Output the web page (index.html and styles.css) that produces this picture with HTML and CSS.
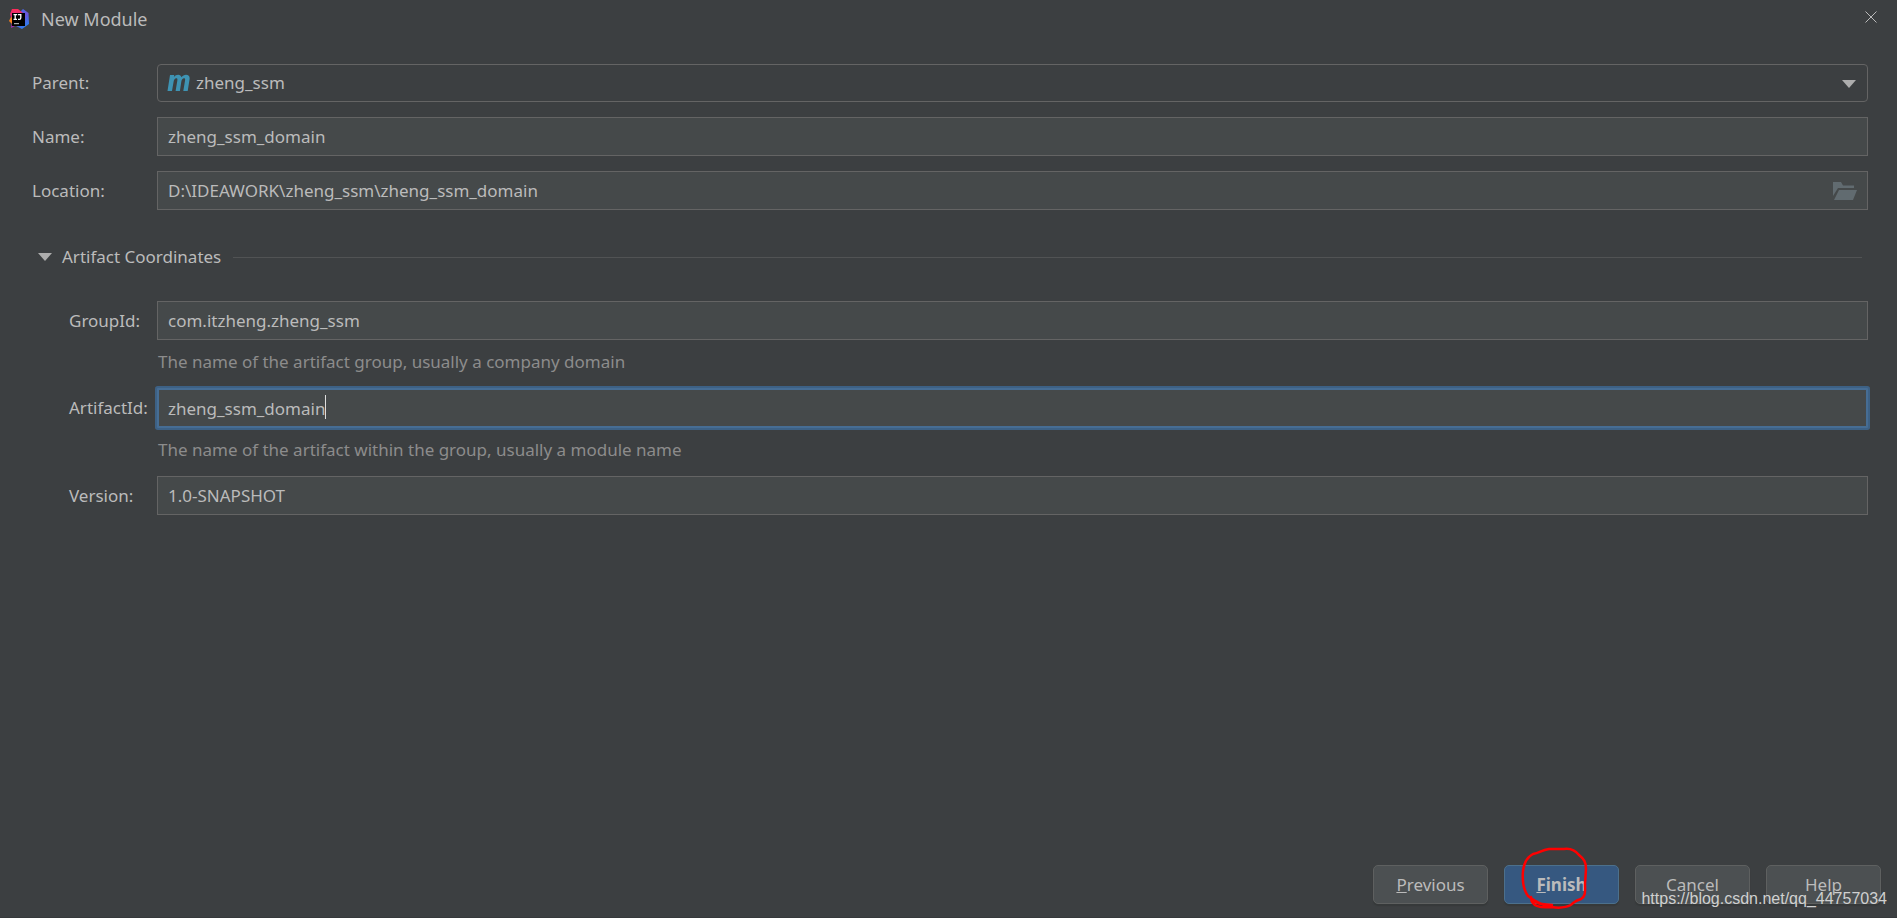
FILE: index.html
```html
<!DOCTYPE html>
<html lang="en">
<head>
<meta charset="utf-8">
<title>New Module</title>
<link rel="stylesheet" href="styles.css">
</head>
<body>
<form class="dialog">
  <header class="titlebar">
    <svg class="app-icon" viewBox="0 0 20 20" aria-hidden="true">
      <defs>
        <linearGradient id="blue" x1="0" y1="0" x2="0.4" y2="1"><stop offset="0" stop-color="#3a6ff0"/><stop offset="0.5" stop-color="#6a55d8"/><stop offset="1" stop-color="#2f7bf0"/></linearGradient>
        <linearGradient id="warm" x1="0" y1="0" x2="0" y2="1"><stop offset="0" stop-color="#fe2b57"/><stop offset="1" stop-color="#a02cc0"/></linearGradient>
      </defs>
      <path fill="url(#blue)" d="M12 2l2-2 5.500 4L20 15l-7 5-6-3z"/>
      <path fill="url(#warm)" d="M3 0h6l5 4-8 13-4 2 1-6-2-8z"/>
      <path fill="#fc801d" d="M2 8l2 1v5l-1 1-3-3z"/>
      <path fill="#000" d="M3 4h13v13H3z"/>
      <path stroke="#fff" stroke-width="1.300" fill="none" d="M4.500 5.600h3.500M6.200 5.600v4.800M4.500 10.400h3.500M8.800 5.600h3v3.200c0 1.200-.6 1.600-1.400 1.600H9"/>
      <path fill="#aaa" d="M5 14h5v1.200H5z"/>
    </svg>
    <h1 class="title">New Module</h1>
    <button class="close" type="button" aria-label="Close">
      <svg viewBox="0 0 12 12" aria-hidden="true"><path d="M.5 .5l11 11M11.500 .5l-11 11"/></svg>
    </button>
  </header>

  <main class="content">
    <div class="fields">
      <label for="parent">Parent:</label>
      <div class="control">
        <select class="field combo" id="parent"><option>zheng_ssm</option></select>
        <svg class="maven" viewBox="0 0 24 18" aria-hidden="true"><path d="M4 1h4.200l-.3 2C9.200 1.500 10.500.7 12.200.7c1.800 0 2.900.9 3.200 2.500C16.600 1.600 18.200.7 20 .7c2.900 0 4.100 1.900 3.500 5L21.700 17h-4.400l1.700-10.300c.3-1.800 0-2.500-1-2.500-1.400 0-2.300 1.300-2.700 3.600L13.900 17H9.600l1.700-10.300c.3-1.800 0-2.500-1-2.500-1.400 0-2.300 1.300-2.700 3.600L6 17H1.500z"/></svg>
        <svg class="arrow combo-arrow" viewBox="0 0 14 8" aria-hidden="true"><path d="M0 0h14L7 8z"/></svg>
      </div>
      <label for="name">Name:</label>
      <input class="field" id="name" type="text" value="zheng_ssm_domain">
      <label for="location">Location:</label>
      <div class="control">
        <input class="field" id="location" type="text" value="D:\IDEAWORK\zheng_ssm\zheng_ssm_domain">
        <button class="browse" type="button" aria-label="Browse">
          <svg viewBox="0 0 24 18" aria-hidden="true"><path d="M0 0h8l2 3.500h11V6H5L0 14z"/><path d="M6 8h18l-4 10H1z"/></svg>
        </button>
      </div>
    </div>

    <button class="section" type="button" aria-expanded="true">
      <svg class="arrow" viewBox="0 0 14 8" aria-hidden="true"><path d="M0 0h14L7 8z"/></svg>
      <span>Artifact Coordinates</span>
      <span class="rule"></span>
    </button>

    <div class="coordinates">
      <label for="group">GroupId:</label>
      <input class="field" id="group" type="text" value="com.itzheng.zheng_ssm">
      <p class="hint">The name of the artifact group, usually a company domain</p>
      <label for="artifact">ArtifactId:</label>
      <div class="control">
        <input class="field active" id="artifact" type="text" value="zheng_ssm_domain">
        <span class="caret"></span>
      </div>
      <p class="hint">The name of the artifact within the group, usually a module name</p>
      <label for="version">Version:</label>
      <input class="field" id="version" type="text" value="1.0-SNAPSHOT">
    </div>
  </main>

  <footer class="actions">
    <button class="action" type="button"><u>P</u>revious</button>
    <div class="control">
      <button class="action primary" type="submit"><u>F</u>inish</button>
      <svg class="mark" viewBox="0 0 70 64" aria-hidden="true"><path d="M62 54C67 51 66 46 66 39L67 24C67 17 65 14 60 10C56 5 52 3 45 4L30 4C22 5 21 8 14 9C8 12 5 18 4 26C3 37 4 44 9 51C14 55 22 60 33 62C43 64 52 61 54 58Q58 55 62 54M12 52C12 62 22 63 33 62M14 55C19 60 25 59 33 60"/></svg>
    </div>
    <button class="action" type="button">Cancel</button>
    <button class="action" type="button">Help</button>
  </footer>
  <span class="watermark">https://blog.csdn.net/qq_44757034</span>
</form>
</body>
</html>
```
FILE: styles.css
```css
* {
  box-sizing: border-box;
}

body {
  margin: 0;
  background: #3c3f41;
}

body,
input,
select,
button {
  color: #bbbbbb;
  font-family: "Noto Sans", sans-serif;
  font-size: 17px;
  line-height: 24px;
}

.dialog {
  position: relative;
  display: flex;
  flex-direction: column;
  min-height: 100vh;
  border-bottom: 1px solid #36393b;
}

.titlebar {
  display: flex;
  align-items: center;
  height: 38px;
  padding: 0 20px 0 9px;
}

.app-icon {
  width: 20px;
  height: 20px;
}

.title {
  flex: 1;
  margin: 0 0 0 12px;
  font-size: 18px;
  font-weight: 400;
}

.close {
  display: flex;
  padding: 0 0 4px;
  border: 0;
  background: none;
}

.close svg {
  width: 12px;
  height: 12px;
  fill: none;
  stroke: #bbbbbb;
}

.content {
  flex: 1;
  padding: 26px 29px 0 32px;
}

.fields,
.coordinates {
  display: grid;
  grid-template-columns: 125px 1fr;
  align-items: center;
}

.fields {
  row-gap: 15px;
}

.coordinates {
  grid-template-columns: 88px 1fr;
  padding-left: 37px;
}

.control {
  position: relative;
}

.field {
  display: block;
  width: 100%;
  height: 39px;
  padding: 0 10px;
  border: 1px solid #646464;
  border-radius: 0;
  outline: 0;
  background: #45494a;
}

.combo {
  height: 38px;
  padding-left: 38px;
  border-radius: 4px;
  background: #3c3f41;
  appearance: none;
}

.maven {
  position: absolute;
  top: 10px;
  left: 9px;
  width: 24px;
  height: 18px;
  fill: #3e93b3;
}

.arrow {
  width: 14px;
  height: 8px;
  fill: #adadad;
}

.combo-arrow {
  position: absolute;
  top: 16px;
  right: 12px;
}

.browse {
  position: absolute;
  top: 11px;
  right: 11px;
  display: flex;
  padding: 0;
  border: 0;
  background: none;
}

.browse svg {
  width: 24px;
  height: 18px;
  fill: #616b70;
}

.section {
  display: flex;
  align-items: center;
  width: 100%;
  margin: 35px 0 32px;
  padding: 0 6px;
  border: 0;
  background: none;
}

.section .arrow {
  margin-right: 10px;
}

.rule {
  flex: 1;
  height: 1px;
  margin-left: 12px;
  background: #515354;
}

.hint {
  grid-column: 2;
  height: 48px;
  margin: 0;
  padding-left: 1px;
  color: #8c8c8c;
  line-height: 44px;
}

.active {
  height: 40px;
  padding: 0 9px;
  border: 2px solid #466d94;
  border-radius: 1px;
  box-shadow: 0 0 0 2px #3d6185;
}

.caret {
  position: absolute;
  top: 7px;
  left: 168px;
  width: 1px;
  height: 24px;
  background: #dddddd;
}

.actions {
  display: flex;
  justify-content: flex-end;
  gap: 16px;
  padding: 0 16px 13px;
}

.action {
  display: block;
  width: 115px;
  height: 39px;
  padding: 0;
  border: 1px solid #5e6060;
  border-radius: 5px;
  background: #4c5052;
  box-shadow: 0 2px 1px #36393a;
}

.primary {
  border-color: #4c708c;
  background: #365880;
  font-weight: 700;
}

.mark {
  position: absolute;
  top: -20px;
  left: 15px;
  width: 70px;
  height: 64px;
  fill: none;
  stroke: #ff0000;
  stroke-width: 2.500;
  stroke-linecap: round;
  pointer-events: none;
}

.watermark {
  position: absolute;
  right: 10px;
  bottom: 6px;
  color: #d0d0d0;
  font-family: "Liberation Sans", sans-serif;
  font-size: 16px;
}
```
